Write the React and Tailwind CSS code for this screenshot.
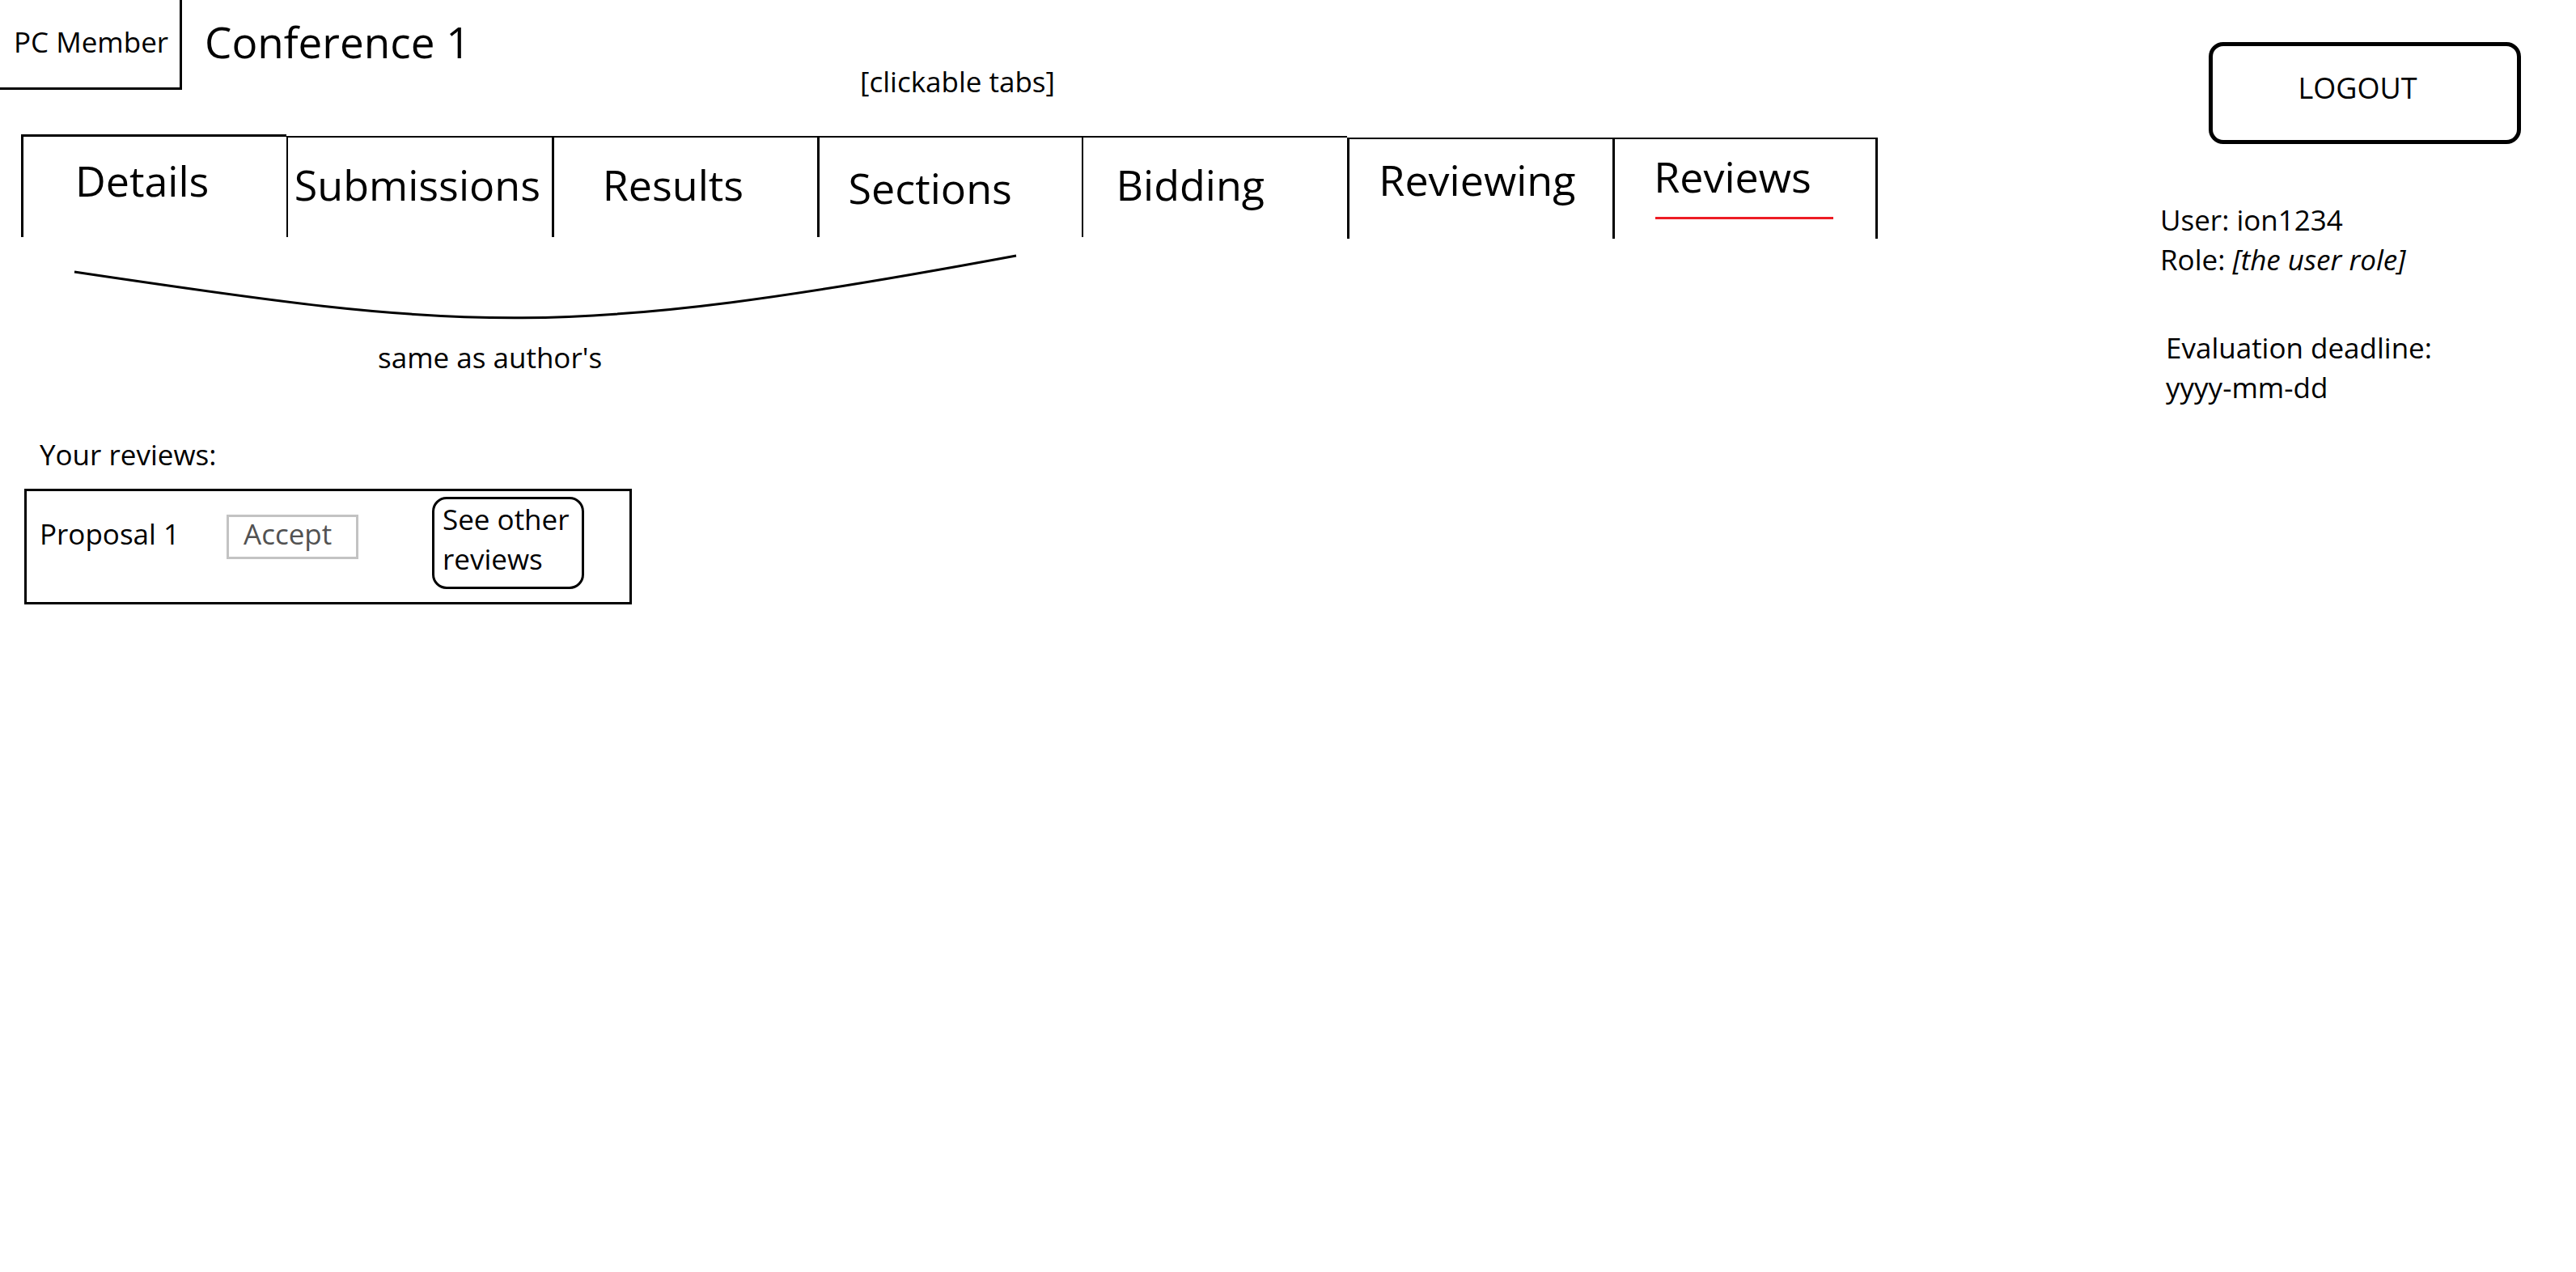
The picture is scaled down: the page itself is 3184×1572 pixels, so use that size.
const TABS = [
  { label: "Details", className: "border-t-[3px] border-l-[3px] mb-0.5 pt-6 pl-16" },
  { label: "Submissions", className: "border-t-2 border-l-2 mt-0.5 mb-0.5 pt-7 pl-2" },
  { label: "Results", className: "border-t-2 border-l-[3px] mt-0.5 mb-0.5 pt-7 pl-15" },
  { label: "Sections", className: "border-t-2 border-l-[3px] mt-0.5 mb-0.5 pt-8 pl-9" },
  { label: "Bidding", className: "border-t-2 border-l-2 mt-0.5 mb-0.5 pt-7 pl-10" },
  { label: "Reviewing", className: "border-t-2 border-l-[3px] mt-1 pt-5 pl-9" },
  { label: "Reviews", className: "border-t-2 border-x-[3px] mt-1 pt-4 pl-12", selected: true },
];

function Header() {
  return (
    <header className="flex items-start">
      <div className="flex h-[111px] w-[225px] shrink-0 items-start border-r-[3px] border-b-[3px] border-black pt-[27px] pl-[17px] whitespace-nowrap">
        PC Member
      </div>
      <h1 className="mt-[22px] ml-7 w-[810px] text-[53px] leading-[60px]">Conference 1</h1>
      <p className="mt-[76px] whitespace-nowrap">[clickable tabs]</p>
    </header>
  );
}

function Tabs() {
  return (
    <div role="tablist" className="mt-[41px] mr-[349px] ml-[26px] grid h-[129px] grid-cols-7">
      {TABS.map((tab) => (
        <button
          key={tab.label}
          type="button"
          role="tab"
          aria-selected={Boolean(tab.selected)}
          className={`flex flex-col items-start border-black text-left text-[52px] leading-[60px] ${tab.className}`}
        >
          {tab.label}
          {tab.selected && <span className="mt-5 ml-0.5 h-[3px] w-[220px] bg-[#ed1c24]" />}
        </button>
      ))}
    </div>
  );
}

function SharedTabsNote() {
  return (
    <figure className="mt-[18px]">
      <svg
        className="ml-[90px] block h-[84px] w-[1167px]"
        viewBox="90 312 1167 84"
        fill="none"
        stroke="black"
        strokeWidth="3"
        aria-hidden="true"
      >
        <path d="M92 335C582 408 690 420 1256 315" />
      </svg>
      <figcaption className="mt-5 ml-[467px]">same as author's</figcaption>
    </figure>
  );
}

function Reviews() {
  return (
    <section className="mt-[71px]">
      <h2 className="ml-[49px]">Your reviews:</h2>
      <ul className="mt-[18px] ml-[30px] w-[751px]">
        <li className="flex h-[143px] items-start border-[3px] border-black pl-4">
          <span className="mt-7 w-[231px]">Proposal 1</span>
          <button
            type="button"
            disabled
            className="mt-[29px] flex h-[55px] w-[163px] items-center border-[3px] border-[#c3c3c3] pb-2 pl-[18px] text-neutral-600"
          >
            Accept
          </button>
          <button
            type="button"
            className="mt-[7px] ml-[91px] flex h-[114px] w-[188px] items-start rounded-[18px] border-[3px] border-black pl-2.5 text-left"
          >
            See other reviews
          </button>
        </li>
      </ul>
    </section>
  );
}

function Account() {
  return (
    <aside className="w-[514px] shrink-0 pt-[52px]">
      <button
        type="button"
        className="ml-[60px] flex h-[126px] w-[386px] items-center justify-center rounded-[18px] border-[5px] border-black pr-[18px] pb-3.5 text-[36px]"
      >
        LOGOUT
      </button>
      <p className="mt-[69px]">User: ion1234</p>
      <p>
        Role: <em>[the user role]</em>
      </p>
      <p className="mt-[60px] ml-[7px]">
        Evaluation deadline:
        <br />
        yyyy-mm-dd
      </p>
    </aside>
  );
}

export default function App() {
  return (
    <div className="flex min-h-screen items-start bg-white font-['Open_Sans',sans-serif] text-[35px] leading-[49px] text-black">
      <main className="min-w-0 flex-1">
        <Header />
        <Tabs />
        <SharedTabsNote />
        <Reviews />
      </main>
      <Account />
    </div>
  );
}
